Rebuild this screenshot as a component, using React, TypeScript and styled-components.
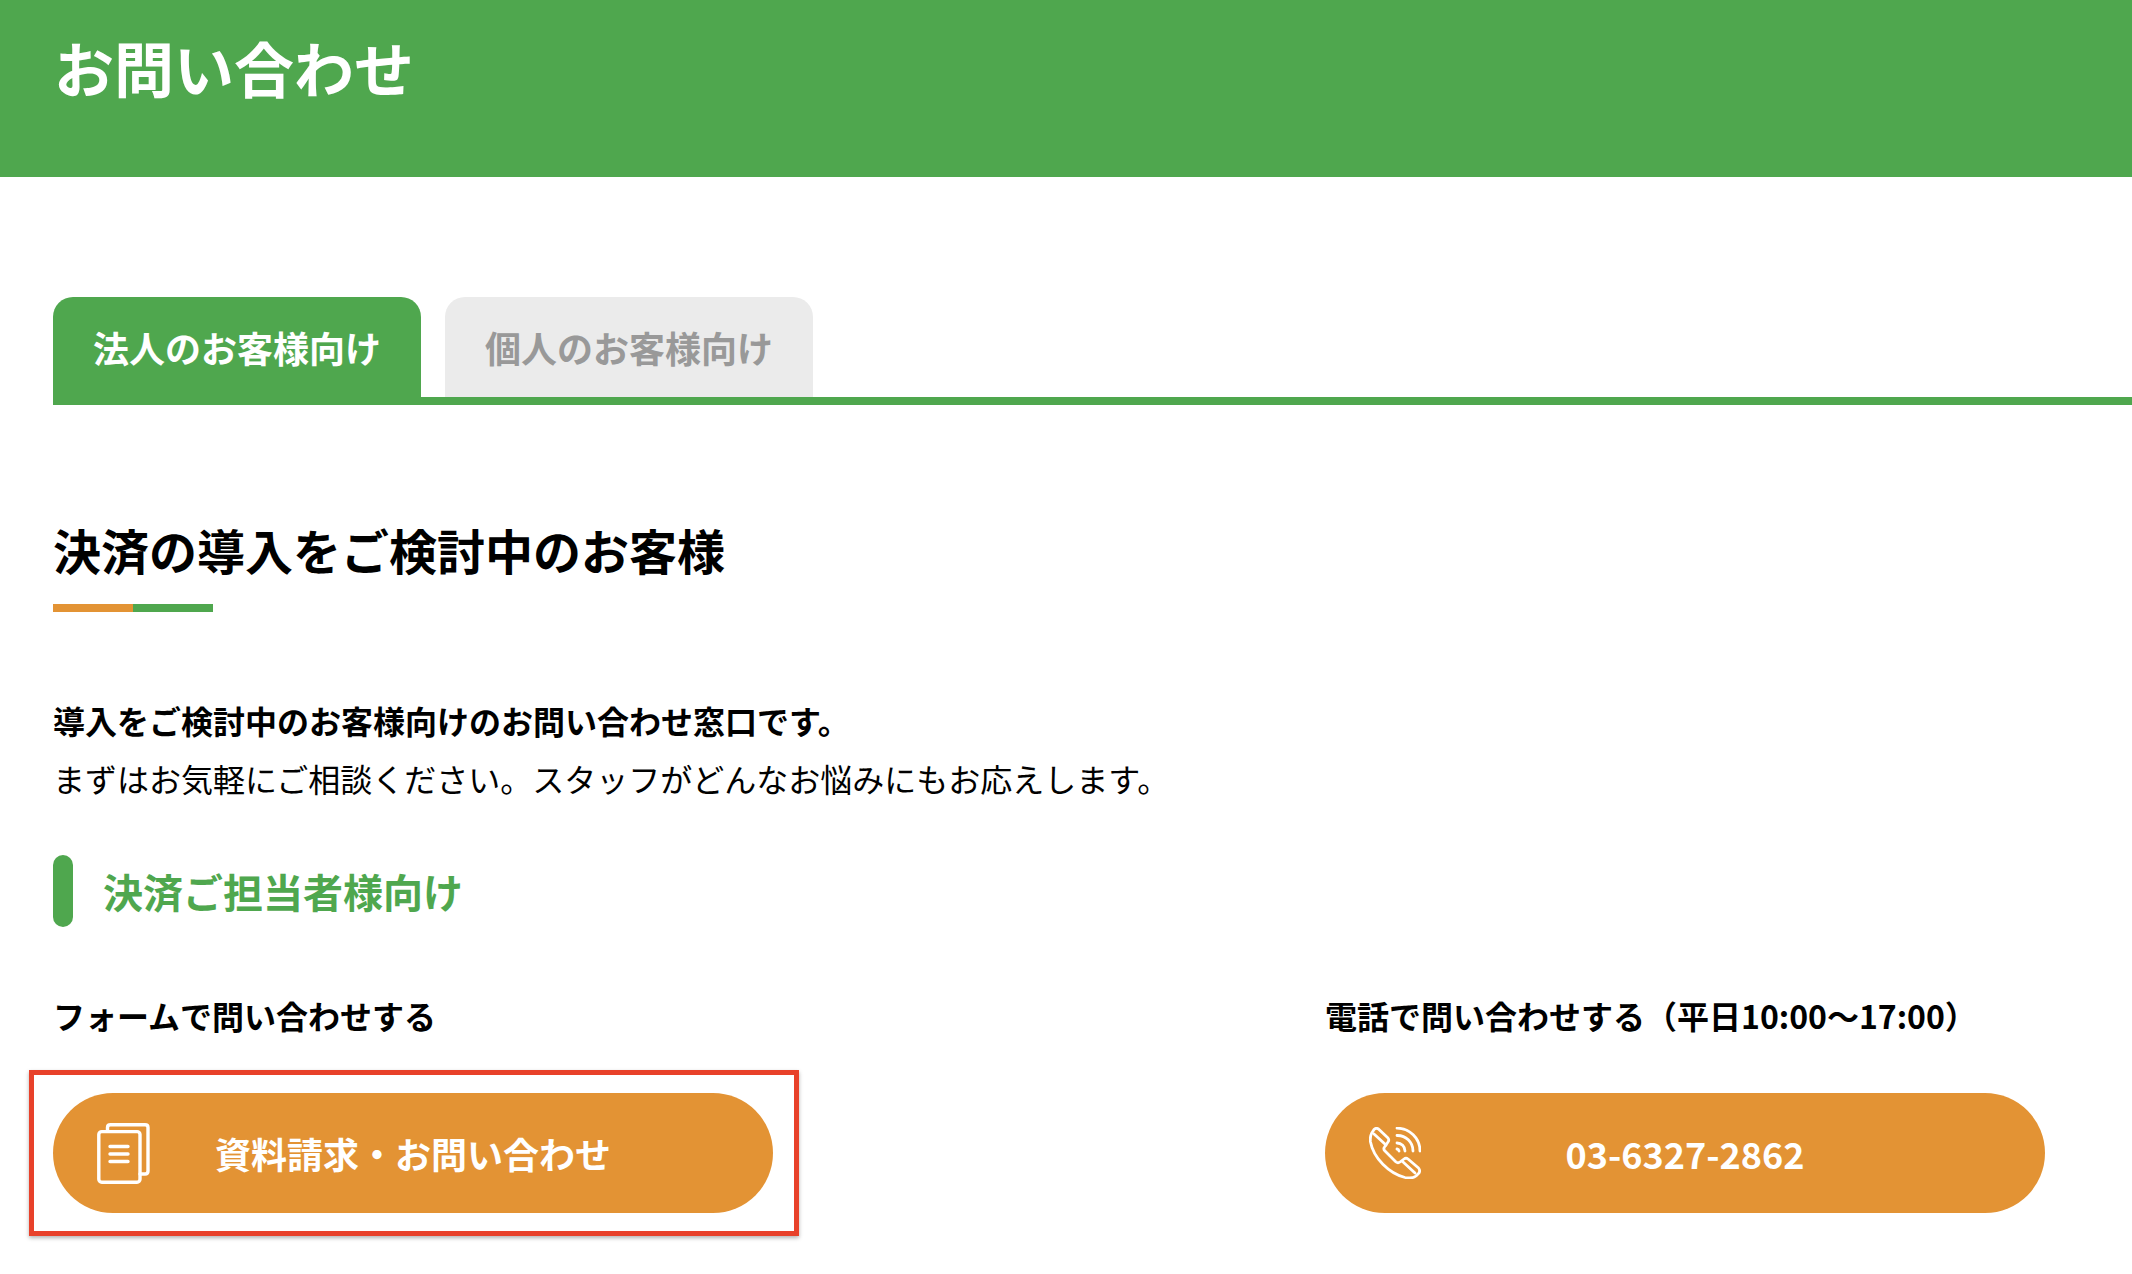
import React from 'react';
import styled, { createGlobalStyle } from 'styled-components';

const GREEN = '#4fa74e';
const ORANGE = '#e39334';

const GlobalStyle = createGlobalStyle`
    html, body {
        margin: 0;
        padding: 0;
        background: #fff;
    }
    body {
        font-family: "Noto Sans CJK JP", "Noto Sans", sans-serif;
        color: #000;
    }
`;

const Page = styled.div`
    height: 1274px;
    overflow: hidden;
`;

const PageHeader = styled.header`
    height: 177px;
    padding: 22px 0 0 54px;
    box-sizing: border-box;
    background: ${GREEN};
`;

const PageTitle = styled.h1`
    margin: 0;
    color: #fff;
    font-size: 60px;
    line-height: 90px;
    font-weight: 700;
`;

const Main = styled.main`
    padding: 120px 0 0 53px;
`;

const TabList = styled.div`
    display: flex;
    gap: 24px;
    height: 100px;
    border-bottom: 8px solid ${GREEN};
`;

const Tab = styled.div<{ $active?: boolean }>`
    width: 368px;
    height: ${props => (props.$active ? '108px' : '100px')};
    box-sizing: border-box;
    padding-top: 23px;
    border-radius: 20px 20px 0 0;
    text-align: center;
    font-size: 36px;
    line-height: 54px;
    font-weight: 700;
    background: ${props => (props.$active ? GREEN : '#ebebeb')};
    color: ${props => (props.$active ? '#fff' : '#999')};
`;

const SectionTitle = styled.h2`
    margin: 108px 0 0;
    font-size: 48px;
    line-height: 72px;
    font-weight: 700;
`;

const TitleRule = styled.div`
    display: flex;
    width: 160px;
    height: 8px;
    margin-top: 19px;
`;

const RulePart = styled.span<{ $color: string }>`
    flex: 1;
    background: ${props => props.$color};
`;

const Lead = styled.div`
    margin-top: 80px;
    font-size: 32px;
    line-height: 57.6px;
`;

const LeadStrong = styled.div`
    font-weight: 700;
`;

const SubTitle = styled.h3`
    display: flex;
    align-items: center;
    gap: 30px;
    margin: 48px 0 0;
    height: 72px;
    color: ${GREEN};
    font-size: 40px;
    font-weight: 700;

    &::before {
        content: '';
        width: 20px;
        height: 72px;
        border-radius: 10px;
        background: ${GREEN};
    }
`;

const ContactGrid = styled.div`
    display: grid;
    grid-template-columns: 720px 720px;
    column-gap: 552px;
    margin-top: 64px;
`;

const ContactColumn = styled.div`
    position: relative;
`;

const ContactLabel = styled.div`
    font-size: 32px;
    line-height: 48px;
    font-weight: 700;
    margin-bottom: 54px;
`;

const ContactButton = styled.a`
    display: grid;
    grid-template-columns: 1fr auto 1fr;
    align-items: center;
    height: 120px;
    padding: 0 44px;
    box-sizing: border-box;
    border-radius: 60px;
    background: ${ORANGE};
    color: #fff;
    font-size: 36px;
    font-weight: 700;
`;

const ButtonIcon = styled.svg`
    display: block;
    fill: none;
    stroke: #fff;
    stroke-linecap: round;
    stroke-linejoin: round;
`;

// annotation drawn on top of the first button
const Highlight = styled.div`
    position: absolute;
    left: -24px;
    top: 79px;
    width: 770px;
    height: 166px;
    box-sizing: border-box;
    border: 5px solid #e8412a;
    box-shadow: 0 2px 4px rgba(0, 0, 0, 0.3);
    pointer-events: none;
`;

const DocumentIcon = () => (
    <ButtonIcon width="53" height="61" viewBox="0 0 53 61" strokeWidth="3.4">
        <path d="M10.5 7V4.5Q10.5 1.8 13.5 1.8H48Q51 1.8 51 4.5V48Q51 51 48 51H43" />
        <rect x="1.8" y="8.6" width="41.2" height="50.6" rx="3" />
        <path d="M13 23.5H31M13 31H31M13 38.5H31" />
    </ButtonIcon>
);

const PhoneIcon = () => (
    <ButtonIcon width="52" height="52" viewBox="0 0 52 52" strokeWidth="2.8">
        <path d="M2.5 6.5L5 2.5Q7 .5 9.5 2L19 11Q20.5 13 19 15L15.5 20Q14 22 16 24L27 35Q29 36.5 31 35L35 32Q37 30.5 39 32L49.5 41Q51.5 43.5 50 46L47 49Q43 52 36 50.5C20 46.5 4.5 31 1.5 15Q.8 10 2.5 6.5Z" />
        <path d="M5 7L17 18M33.5 34.5L46 46" />
        <path d="M28 1.2A23 23 0 0 1 51 24M28 8.5A15.5 15.5 0 0 1 44 24M28 16A8 8 0 0 1 36 24M28 22A2.5 2.5 0 0 1 30 24" />
    </ButtonIcon>
);

const App: React.FC = () => {
    return (
        <Page>
            <GlobalStyle />
            <PageHeader>
                <PageTitle>お問い合わせ</PageTitle>
            </PageHeader>
            <Main>
                <TabList>
                    <Tab $active>法人のお客様向け</Tab>
                    <Tab>個人のお客様向け</Tab>
                </TabList>
                <SectionTitle>決済の導入をご検討中のお客様</SectionTitle>
                <TitleRule>
                    <RulePart $color={ORANGE} />
                    <RulePart $color={GREEN} />
                </TitleRule>
                <Lead>
                    <LeadStrong>導入をご検討中のお客様向けのお問い合わせ窓口です。</LeadStrong>
                    <div>まずはお気軽にご相談ください。スタッフがどんなお悩みにもお応えします。</div>
                </Lead>
                <SubTitle>決済ご担当者様向け</SubTitle>
                <ContactGrid>
                    <ContactColumn>
                        <ContactLabel>フォームで問い合わせする</ContactLabel>
                        <ContactButton>
                            <DocumentIcon />
                            <span>資料請求・お問い合わせ</span>
                        </ContactButton>
                        <Highlight />
                    </ContactColumn>
                    <ContactColumn>
                        <ContactLabel>電話で問い合わせする（平日10:00〜17:00）</ContactLabel>
                        <ContactButton>
                            <PhoneIcon />
                            <span>03-6327-2862</span>
                        </ContactButton>
                    </ContactColumn>
                </ContactGrid>
            </Main>
        </Page>
    );
};

export default App;
